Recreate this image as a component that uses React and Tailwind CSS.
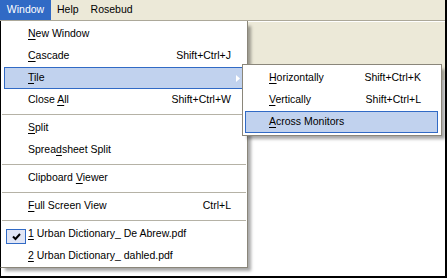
import React from 'react';

const font = { fontFamily: '"Liberation Sans", Arial, sans-serif' };

// label with one underlined mnemonic letter
const Label = ({ text, at }) => (
  <span>
    {text.slice(0, at)}
    <u className="underline underline-offset-[2px]">{text[at]}</u>
    {text.slice(at + 1)}
  </span>
);

const Item = ({ text, at, shortcut, active, arrow, checked }) => (
  <div
    className={`relative flex h-[22px] items-center justify-between border pl-[23px] pr-[11px] ${
      active ? 'border-[#316ac5] bg-[#c1d2ee]' : 'border-transparent'
    }`}
  >
    {checked && (
      <div className="absolute left-[1px] top-[5px] flex h-[15px] w-[20px] items-center justify-center border border-[#316ac5] bg-[#e1e6f6]">
        <svg width="9" height="8" viewBox="0 0 9 8">
          <path d="M1 3.5 L3.5 6 L8 1" stroke="#000" strokeWidth="2" fill="none" />
        </svg>
      </div>
    )}
    <Label text={text} at={at} />
    {shortcut && <span>{shortcut}</span>}
    {arrow && (
      <svg className="absolute right-[2px] top-[7px]" width="4" height="7" viewBox="0 0 4 7">
        <path d="M0 0 L4 3.5 L0 7 Z" fill="#fff" />
      </svg>
    )}
  </div>
);

const Sep = () => (
  <div className="flex h-[6px] items-center pl-[1px] pr-[1px]">
    <div className="h-px w-full bg-[#b5b2a6]" />
  </div>
);

export default function App() {
  return (
    <div
      className="relative flex h-[278px] w-[447px] flex-col overflow-hidden border-b-2 border-r-2 border-black bg-[#ece9d8] text-[10.5px] text-black"
      style={font}
    >
      {/* menu bar */}
      <div className="flex h-[21px] shrink-0 border-b border-[#aca899]">
        <div className="flex h-[20px] w-[51px] items-center justify-center bg-[#316ac5] text-white">Window</div>
        <div className="flex h-[20px] items-center px-[6px]">Help</div>
        <div className="flex h-[20px] items-center px-[6px]">Rosebud</div>
      </div>

      {/* workspace */}
      <div className="flex flex-1 flex-col border-l border-black">
        <div className="h-[59px] border-t border-white bg-[#ece9d8]" />
        <div className="flex-1 bg-white" />
      </div>

      {/* Window menu */}
      <div className="absolute left-0 top-[21px] w-[248px] border-b border-l border-r border-l-black border-[#8a867a] bg-white pt-[2px] shadow-[4px_4px_3px_-1px_rgba(0,0,0,0.35)]">
        <div className="ml-[3px] mr-[4px]">
          <Item text="New Window" at={0} />
          <Item text="Cascade" at={0} shortcut="Shift+Ctrl+J" />
          <Item text="Tile" at={0} active arrow />
          <Item text="Close All" at={6} shortcut="Shift+Ctrl+W" />
        </div>
        <Sep />
        <div className="ml-[3px] mr-[4px]">
          <Item text="Split" at={0} />
          <Item text="Spreadsheet Split" at={5} />
        </div>
        <Sep />
        <div className="ml-[3px] mr-[4px]">
          <Item text="Clipboard Viewer" at={10} />
        </div>
        <Sep />
        <div className="ml-[3px] mr-[4px]">
          <Item text="Full Screen View" at={0} shortcut="Ctrl+L" />
        </div>
        <Sep />
        <div className="ml-[3px] mr-[4px]">
          <Item text="1 Urban Dictionary_ De Abrew.pdf" at={0} checked />
          <Item text="2 Urban Dictionary_ dahled.pdf" at={0} />
        </div>
      </div>

      {/* Tile submenu */}
      <div className="absolute left-[242px] top-[64px] w-[200px] border border-[#8a867a] bg-white py-[2px] shadow-[4px_4px_3px_-1px_rgba(0,0,0,0.35)]">
        <div className="ml-[2px] mr-[3px] [&>div]:pr-[16px]">
          <Item text="Horizontally" at={0} shortcut="Shift+Ctrl+K" />
          <Item text="Vertically" at={0} shortcut="Shift+Ctrl+L" />
          <Item text="Across Monitors" at={0} active />
        </div>
      </div>
    </div>
  );
}
